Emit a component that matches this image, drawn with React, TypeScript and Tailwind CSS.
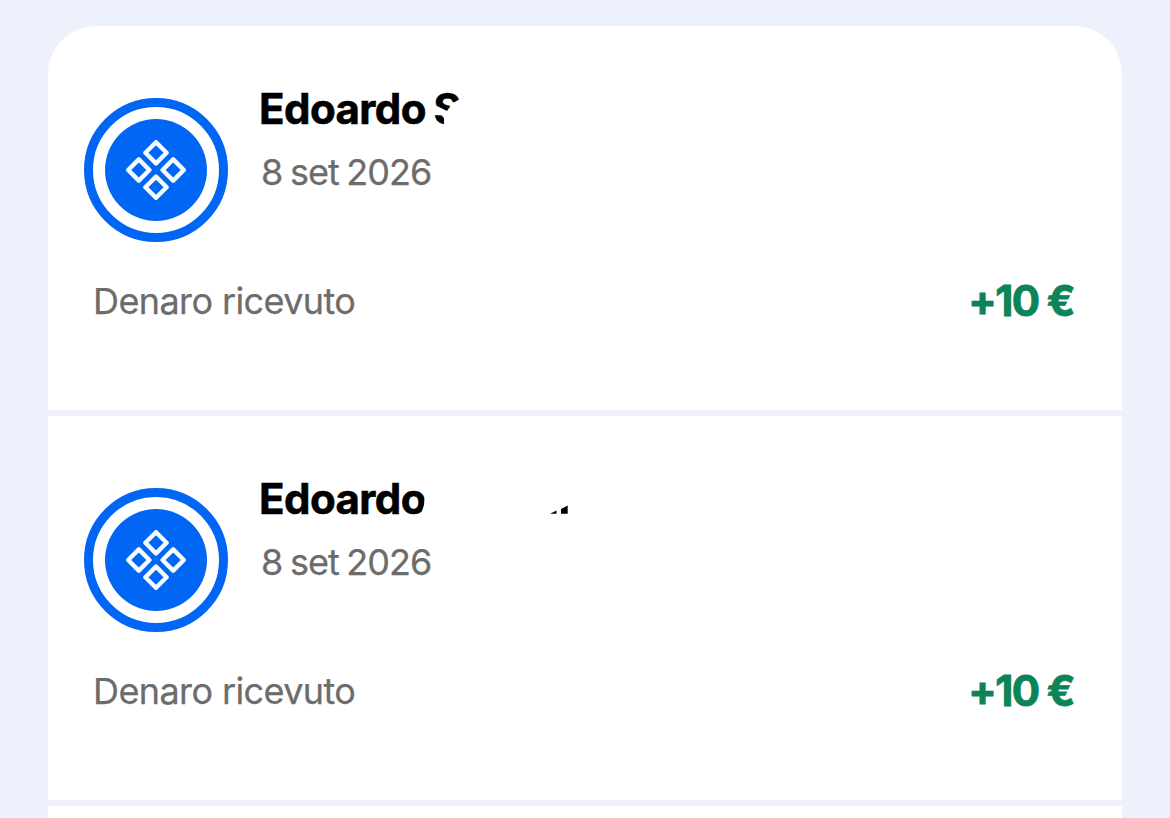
import React from 'react';

interface Transaction {
  id: string;
  name: string;
  date: string;
  label: string;
  amount: string;
  mask: 'initial' | 'full';
}

const transactions: Transaction[] = [
  { id: '1', name: 'Edoardo S', date: '8 set 2026', label: 'Denaro ricevuto', amount: '+10 €', mask: 'initial' },
  { id: '2', name: 'Edoardo', date: '8 set 2026', label: 'Denaro ricevuto', amount: '+10 €', mask: 'full' },
];

const Avatar: React.FC = () => (
  <div className="flex size-36 shrink-0 items-center justify-center rounded-full border-[9px] border-[#0166f4]">
    <div className="flex size-[102px] items-center justify-center rounded-full bg-[#0166f4]">
      <svg width="60" height="60" viewBox="0 0 60 60" fill="none" stroke="#f4fcff" strokeWidth="4.4" strokeLinejoin="round">
        <path d="M30 2.2 40.6 12.8 30 23.4 19.4 12.8Z" />
        <path d="M12.8 19.4 23.4 30 12.8 40.6 2.2 30Z" />
        <path d="M47.2 19.4 57.8 30 47.2 40.6 36.6 30Z" />
        <path d="M30 36.6 40.6 47.2 30 57.8 19.4 47.2Z" />
      </svg>
    </div>
  </div>
);

// White strokes that hide the surname
const NameMask: React.FC<{ type: Transaction['mask'] }> = ({ type }) =>
  type === 'initial' ? (
    <svg className="absolute top-0 left-[168px]" width="40" height="50" viewBox="0 0 40 50" fill="white">
      <path d="M33 15 25 19.5 20 27 6 20 6 31 17 31.5 17 43 36 43 36 15Z" />
    </svg>
  ) : (
    <svg className="absolute top-0 left-[160px]" width="160" height="50" viewBox="0 0 160 50">
      <path d="M5 14 5.6 23 5 31 3 37 5 43 12 43 12 14Z" fill="white" />
      <path d="M131 39.8 137.5 36.5V39.8ZM142 35 148.7 31.5V39.8H142Z" fill="black" />
    </svg>
  );

const TransactionRow: React.FC<{ transaction: Transaction }> = ({ transaction }) => (
  <div className="h-96 bg-white pt-[72px] pr-12 pl-9">
    <div className="flex">
      <Avatar />
      <div className="ml-[31px] -mt-[14px]">
        <div className="relative h-[50px] text-[42px] leading-[50px] font-bold tracking-[-0.55px] [word-spacing:-2px] whitespace-pre text-black [-webkit-text-stroke:0.6px_black]">
          {transaction.name}
          <NameMask type={transaction.mask} />
        </div>
        <div className="mt-[16px] ml-[2px] text-[36px] leading-[44px] tracking-[-1px] [word-spacing:-1.5px] text-[#6c6c6c] [-webkit-text-stroke:0.25px_#6c6c6c]">
          {transaction.date}
        </div>
      </div>
    </div>
    <div className="mt-[34px] ml-[9px] flex items-center justify-between">
      <span className="text-[36px] leading-[50px] tracking-[-0.6px] text-[#6c6c6c] [-webkit-text-stroke:0.25px_#6c6c6c]">
        {transaction.label}
      </span>
      <span className="text-[42px] leading-[50px] font-bold tracking-[-1.6px] text-[#0c8457] [-webkit-text-stroke:0.9px_#0c8457]">
        {transaction.amount}
      </span>
    </div>
  </div>
);

export default function App() {
  return (
    <div className="h-[818px] overflow-hidden bg-[#edf1fb] px-12 pt-[26px] font-['Inter',sans-serif]">
      <div className="flex flex-col gap-1.5 overflow-hidden rounded-t-[48px] bg-[#f0f1fb]">
        {transactions.map((transaction) => (
          <TransactionRow key={transaction.id} transaction={transaction} />
        ))}
        <div className="h-96 bg-white" />
      </div>
    </div>
  );
}
